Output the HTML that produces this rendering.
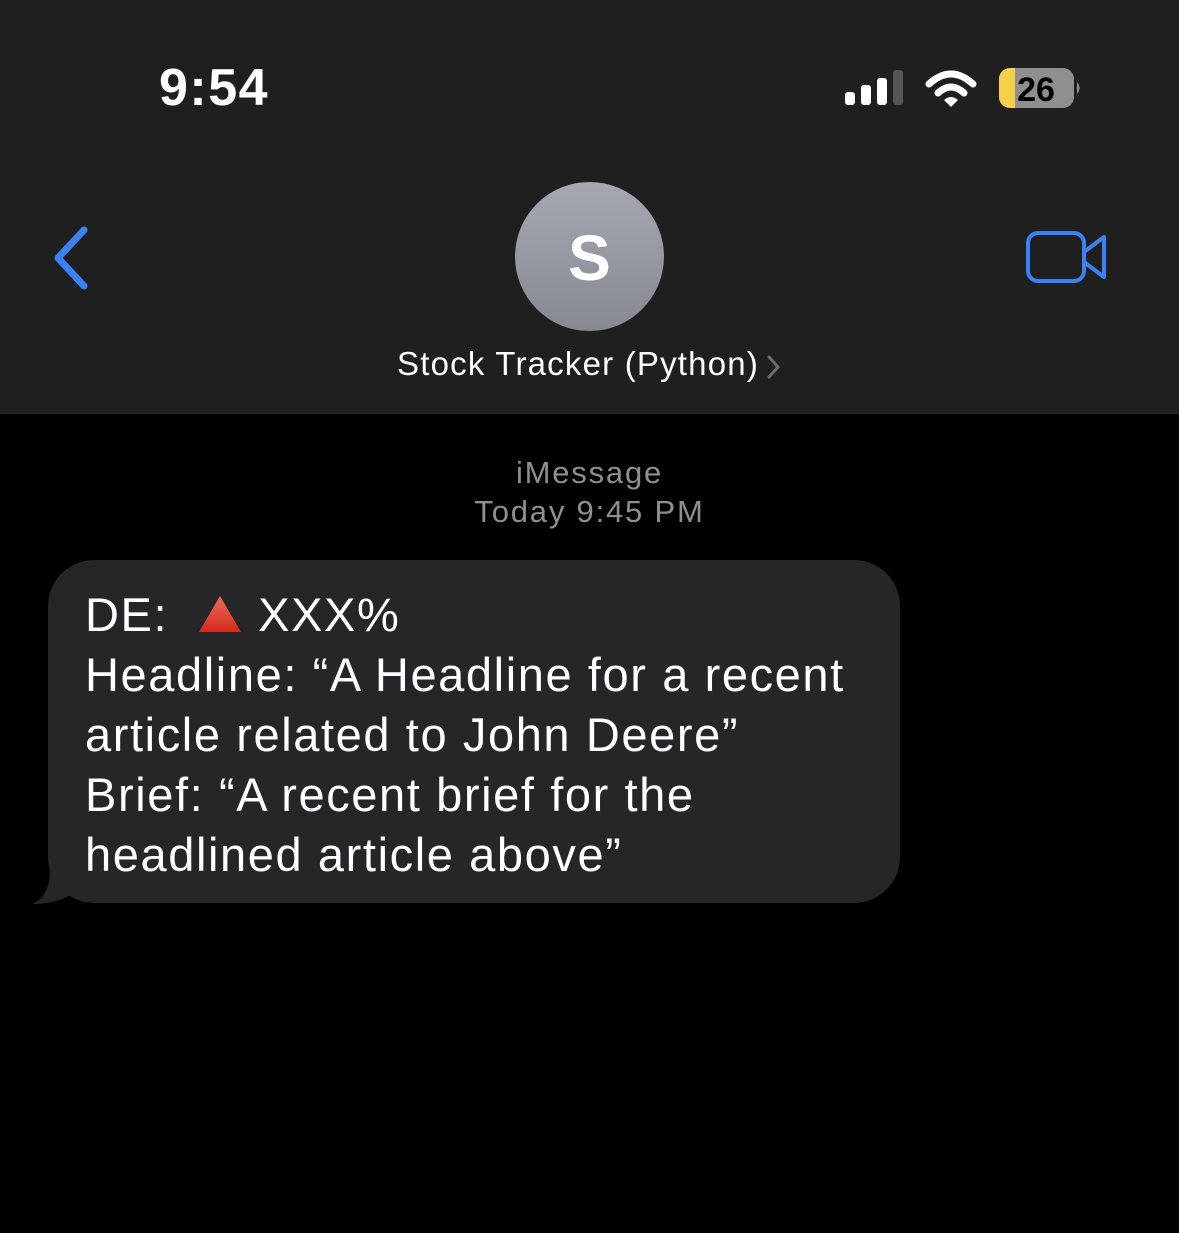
<!DOCTYPE html>
<html><head><meta charset="utf-8"><style>
html,body{margin:0;padding:0;}
body{width:1179px;height:1233px;background:#000;position:relative;overflow:hidden;font-family:"Liberation Sans",sans-serif;color:#fff;}
.hdr{position:absolute;left:0;top:0;width:1179px;height:413px;background:#1f1f1f;border-bottom:1px solid #2c2c2e;}
.time{position:absolute;left:159px;top:58px;font-size:52px;font-weight:bold;letter-spacing:1.5px;}
.av{position:absolute;left:515px;top:182px;width:149px;height:149px;border-radius:50%;background:linear-gradient(#a5a8b1,#868992);text-align:center;line-height:152px;font-size:64px;font-weight:bold;}
.name{position:absolute;left:397px;top:345px;font-size:33px;letter-spacing:1.2px;}
.meta{position:absolute;left:0;width:1179px;text-align:center;color:#8e8e93;font-size:31px;letter-spacing:1.8px;}
.bub{position:absolute;left:48px;top:560px;width:852px;height:343px;background:#262628;border-radius:46px;}
.txt{position:absolute;left:85px;top:585px;font-size:47px;line-height:60px;white-space:pre;letter-spacing:1.6px;}
</style></head><body>
<div class="hdr">
<div class="time">9:54</div>
<svg style="position:absolute;left:845px;top:68px" width="240" height="42">
<rect x="0" y="24" width="10" height="13" rx="3" fill="#fff"/>
<rect x="16" y="17" width="10" height="20" rx="3" fill="#fff"/>
<rect x="32" y="10" width="10" height="27" rx="3" fill="#fff"/>
<rect x="48" y="2" width="10" height="35" rx="3" fill="#555"/>
<path d="M84 16 Q106 -4 128 16" stroke="#fff" stroke-width="7" fill="none" stroke-linecap="round"/>
<path d="M93 25 Q106 13 119 25" stroke="#fff" stroke-width="7" fill="none" stroke-linecap="round"/>
<path d="M99 32 L106 39 L113 32 Q106 26 99 32Z" fill="#fff"/>
<rect x="154" y="0" width="75" height="40" rx="11" fill="#8f8f8f"/>
<path d="M165 0 H170 V40 H165 A11 11 0 0 1 154 29 V11 A11 11 0 0 1 165 0Z" fill="#f5d14a"/>
<path d="M232 14 Q237 20 232 26Z" fill="#8f8f8f"/>
<text x="191" y="33" text-anchor="middle" font-size="34" font-weight="bold" fill="#000" font-family="Liberation Sans">26</text>
</svg>
<svg style="position:absolute;left:48px;top:225px" width="45" height="66"><path d="M36 5 L10 33 L36 61" stroke="#3b82f6" stroke-width="7" fill="none" stroke-linecap="round" stroke-linejoin="round"/></svg>
<div class="av">S</div>
<div class="name">Stock Tracker (Python)</div>
<svg style="position:absolute;left:766px;top:354px" width="16" height="26"><path d="M3 3 L12 13 L3 23" stroke="#6b6b6f" stroke-width="3" fill="none" stroke-linecap="round"/></svg>
<svg style="position:absolute;left:1025px;top:230px" width="84" height="54"><rect x="3" y="3" width="56" height="48" rx="10" stroke="#3b82f6" stroke-width="4" fill="none"/><path d="M59 22 L79 7 V47 L59 32" stroke="#3b82f6" stroke-width="4" fill="none" stroke-linejoin="round"/></svg>
</div>
<div class="meta" style="top:455px">iMessage</div>
<div class="meta" style="top:494px">Today 9:45 PM</div>
<svg style="position:absolute;left:30px;top:860px" width="60" height="46"><path d="M20 0 C22 30 12 40 2 44 C20 44 32 40 42 34 L50 0Z" fill="#262628"/></svg>
<div class="bub"></div>
<div class="txt">DE:  <svg width="46" height="40" style="vertical-align:-3px"><defs><linearGradient id="g" x1="0" y1="0" x2="0" y2="1"><stop offset="0" stop-color="#f06a5a"/><stop offset="1" stop-color="#d42a1c"/></linearGradient></defs><path d="M23 2 L44 38 H2Z" fill="url(#g)"/></svg> XXX%
Headline: “A Headline for a recent
article related to John Deere”
Brief: “A recent brief for the
headlined article above”</div>
</body></html>
